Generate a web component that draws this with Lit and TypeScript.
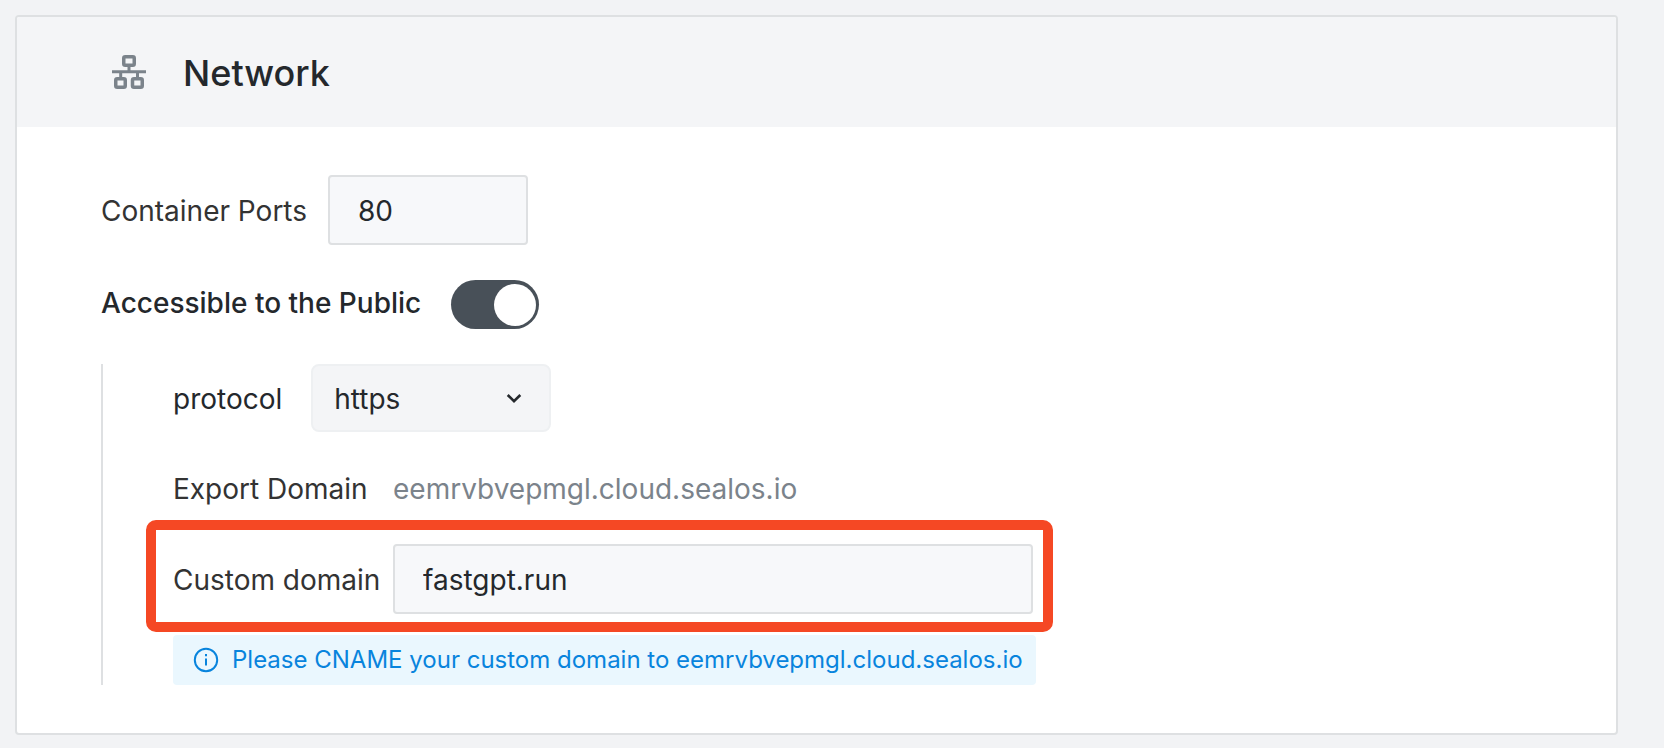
import { LitElement, html, css } from "lit";
import { customElement, state } from "lit/decorators.js";

@customElement("app-root")
export class AppRoot extends LitElement {
  @state() private isPublic = true;
  @state() private exportDomain = "eemrvbvepmgl.cloud.sealos.io";

  static styles = css`
    :host {
      display: block;
      box-sizing: border-box;
      min-height: 100vh;
      padding: 15px 46px 13px 15px;
      background: #f2f3f5;
      color: #24282c;
      font-family: Inter, "Noto Sans", sans-serif;
      font-size: 28px;
      line-height: 42px;
    }
    *,
    *::after {
      box-sizing: border-box;
    }
    .card {
      border: 2px solid #dee0e2;
      border-radius: 4px;
      background: #fff;
      overflow: hidden;
    }
    .header {
      display: flex;
      align-items: center;
      gap: 36px;
      padding: 28px 84px 28px 94px;
      background: #f4f5f7;
    }
    .header svg {
      width: 36px;
      height: 36px;
      color: #7b838b;
    }
    .title {
      margin: 0;
      padding-top: 2px;
      font-size: 36px;
      font-weight: 500;
      line-height: 52px;
    }
    .body {
      padding: 48px 84px;
    }
    .row {
      display: flex;
      align-items: center;
    }
    .row label,
    .row span {
      padding-top: 2px;
    }
    .field-label {
      color: #333;
    }
    .ports {
      gap: 21px;
    }
    .public {
      align-items: flex-start;
      gap: 30px;
      margin-top: 35px;
    }
    .public label {
      font-weight: 500;
    }
    .input {
      height: 70px;
      padding: 2px 28px 0;
      border: 2px solid #dee0e2;
      border-radius: 4px;
      background: #f7f8fa;
      color: inherit;
      font: inherit;
      outline: none;
    }
    .input:focus-visible {
      border-color: #0884dd;
    }
    .port {
      width: 200px;
    }
    .switch {
      display: flex;
      align-items: center;
      width: 88px;
      height: 49px;
      margin: 0;
      padding: 3px;
      border-radius: 25px;
      background: #c5c8cc;
      appearance: none;
      cursor: pointer;
    }
    .switch::after {
      content: "";
      width: 42px;
      height: 42px;
      border-radius: 50%;
      background: #fff;
    }
    .switch:checked {
      justify-content: flex-end;
      background: #485058;
    }
    .details {
      margin-top: 35px;
      padding-left: 70px;
      border-left: 2px solid #dee0e2;
    }
    .protocol {
      gap: 29px;
    }
    .select-wrap {
      display: grid;
      align-items: center;
      width: 240px;
    }
    .select-wrap > * {
      grid-area: 1 / 1;
    }
    select {
      height: 68px;
      padding: 2px 56px 0 21px;
      border: 2px solid #eef0f2;
      border-radius: 8px;
      background: #f4f5f7;
      color: inherit;
      font: inherit;
      appearance: none;
    }
    .chevron {
      justify-self: end;
      width: 32px;
      height: 32px;
      margin-right: 21px;
      pointer-events: none;
    }
    .domain-label {
      flex: none;
      min-width: 220px;
    }
    .export {
      margin-top: 34px;
    }
    .value {
      color: #7b838b;
    }
    .custom {
      position: relative;
      width: fit-content;
      margin-top: 34px;
    }
    .custom::after {
      content: "";
      position: absolute;
      inset: -24px -20px -18px -27px;
      border: 10px solid #f54824;
      border-radius: 10px;
      pointer-events: none;
    }
    .custom-input {
      width: 640px;
    }
    .notice {
      display: flex;
      align-items: center;
      gap: 13px;
      width: fit-content;
      margin: 21px 0 0;
      padding: 7px 13px 7px 20px;
      border-radius: 4px;
      background: #eaf7fe;
      color: #0884dd;
      font-size: 24px;
      line-height: 36px;
    }
    .notice svg {
      width: 26px;
      height: 26px;
    }
  `;

  render() {
    return html`
      <section class="card" aria-labelledby="title">
        <header class="header">
          <svg viewBox="0 0 36 36" fill="none" stroke="currentColor" stroke-width="3.5" aria-hidden="true">
            <rect x="12.75" y="2.75" width="10.5" height="8.5" rx="1.5" />
            <rect x="4.75" y="24.75" width="9.5" height="8.5" rx="1.5" />
            <rect x="21.5" y="24.75" width="9.75" height="8.5" rx="1.5" />
            <path stroke-width="3" d="M1 17.800h34M18 12v6M9.700 18v6M26.500 18v6" />
          </svg>
          <h2 class="title" id="title">Network</h2>
        </header>
        <div class="body">
          <div class="row ports">
            <label class="field-label" for="port">Container Ports</label>
            <input class="input port" id="port" type="text" inputmode="numeric" value="80" />
          </div>
          <div class="row public">
            <label for="public">Accessible to the Public</label>
            <input
              class="switch"
              id="public"
              type="checkbox"
              role="switch"
              .checked=${this.isPublic}
              @change=${(e: Event) => (this.isPublic = (e.target as HTMLInputElement).checked)}
            />
          </div>
          ${this.isPublic ? this.renderDetails() : null}
        </div>
      </section>
    `;
  }

  private renderDetails() {
    return html`
      <div class="details">
        <div class="row protocol">
          <label for="protocol">protocol</label>
          <div class="select-wrap">
            <select id="protocol">
              <option>https</option>
            </select>
            <svg class="chevron" viewBox="0 0 32 32" fill="none" stroke="currentColor" stroke-width="2.6" aria-hidden="true">
              <path d="M9.700 13l6.300 6.200 6.300-6.200" />
            </svg>
          </div>
        </div>
        <div class="row export">
          <span class="field-label domain-label">Export Domain</span>
          <span class="value">${this.exportDomain}</span>
        </div>
        <div class="row custom">
          <label class="field-label domain-label" for="custom">Custom domain</label>
          <input class="input custom-input" id="custom" type="text" value="fastgpt.run" />
        </div>
        <p class="notice">
          <svg viewBox="0 0 26 26" fill="none" stroke="currentColor" stroke-width="2" aria-hidden="true">
            <circle cx="13" cy="13" r="11.200" />
            <path d="M13 11.500v7M13 7v2.200" />
          </svg>
          <span>Please CNAME your custom domain to ${this.exportDomain}</span>
        </p>
      </div>
    `;
  }
}
